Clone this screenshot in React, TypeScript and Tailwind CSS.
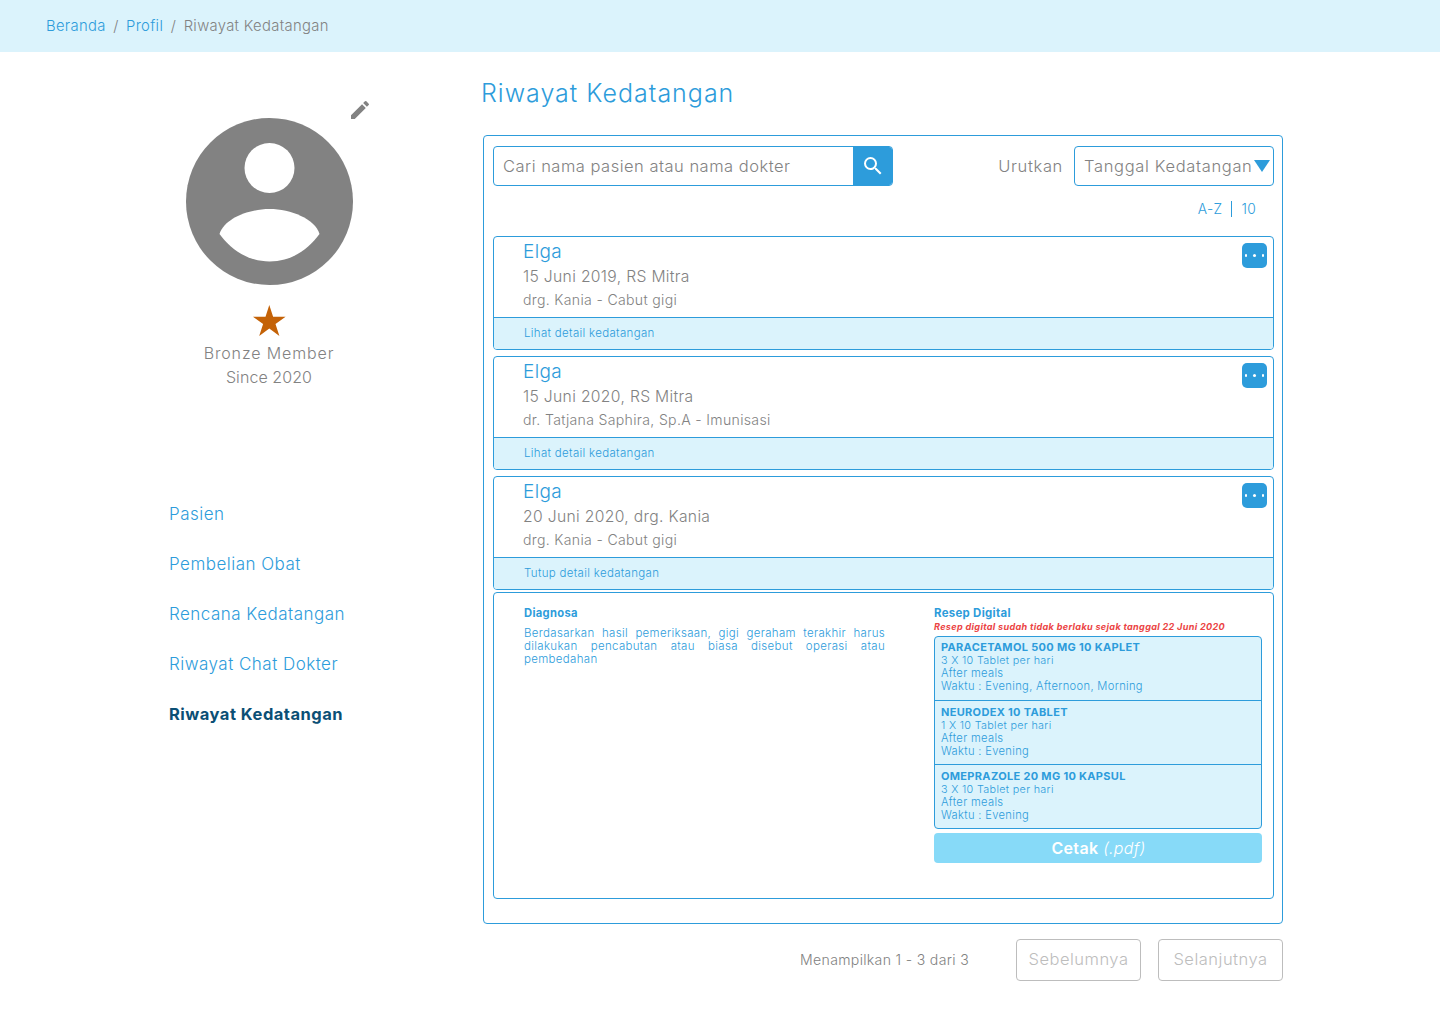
import { MdEdit, MdSearch } from "react-icons/md"

const visits = [
  { date: "15 Juni 2019, RS Mitra", info: "drg. Kania - Cabut gigi", action: "Lihat detail kedatangan" },
  { date: "15 Juni 2020, RS Mitra", info: "dr. Tatjana Saphira, Sp.A - Imunisasi", action: "Lihat detail kedatangan" },
  { date: "20 Juni 2020, drg. Kania", info: "drg. Kania - Cabut gigi", action: "Tutup detail kedatangan" },
]

const medicines = [
  { name: "PARACETAMOL 500 MG 10 KAPLET", dose: "3 X 10 Tablet per hari", time: "Waktu : Evening, Afternoon, Morning" },
  { name: "NEURODEX 10 TABLET", dose: "1 X 10 Tablet per hari", time: "Waktu : Evening" },
  { name: "OMEPRAZOLE 20 MG 10 KAPSUL", dose: "3 X 10 Tablet per hari", time: "Waktu : Evening" },
]

const menu = ["Pasien", "Pembelian Obat", "Rencana Kedatangan", "Riwayat Chat Dokter"]

function VisitCard({ date, info, action }: { date: string; info: string; action: string }) {
  return (
    <div className="relative overflow-hidden rounded-[4px] border border-[#2D9CDB]">
      <div className="h-[80px] pl-[29px] pt-[3px]">
        <div className="text-[19px] leading-[24px] text-[#2D9CDB]">Elga</div>
        <div className="mt-[1px] text-[15.700px] leading-[24px] text-[#828282]">{date}</div>
        <div className="-mt-[1px] text-[14.100px] leading-[24px] text-[#828282]">{info}</div>
      </div>
      <div className="flex h-[32px] items-center border-t border-[#2D9CDB] bg-[#DBF3FC] pl-[30px] text-[11.500px] text-[#2D9CDB]">
        {action}
      </div>
      <button className="absolute right-[6px] top-[6px] flex h-[25px] w-[25px] items-center justify-center gap-[6px] rounded-[5px] bg-[#2D9CDB]">
        <span className="h-[2.500px] w-[2.500px] rounded-full bg-white" />
        <span className="h-[2.500px] w-[2.500px] rounded-full bg-white" />
        <span className="h-[2.500px] w-[2.500px] rounded-full bg-white" />
      </button>
    </div>
  )
}

export default function App() {
  return (
    <div className="min-h-[1024px] bg-white font-['Inter',sans-serif] font-[350] tracking-[0.02em]">
      {/* Breadcrumb */}
      <nav className="flex h-[52px] items-center gap-[7.500px] bg-[#DBF3FC] pl-[46px] text-[14.800px] text-[#2D9CDB]">
        <span>Beranda</span>
        <span className="text-[#828282]">/</span>
        <span>Profil</span>
        <span className="text-[#828282]">/</span>
        <span className="text-[#828282]">Riwayat Kedatangan</span>
      </nav>

      <div className="flex">
        {/* Sidebar */}
        <aside className="w-[483px] shrink-0 pl-[169px]">
          <div className="flex w-[200px] flex-col items-center pt-[66px]">
            <div className="relative h-[167px] w-[167px]">
              <svg viewBox="0 0 167 167" className="h-full w-full">
                <circle cx="83.5" cy="83.5" r="83.5" fill="#828282" />
                <circle cx="83.5" cy="50" r="25" fill="#fff" />
                <path d="M33.5 116C38 101 62 91 83.5 91s45.500 10 50 25c-11 15-28 27.500-50 27.500s-39-12.500-50-27.500z" fill="#fff" />
              </svg>
              <MdEdit className="absolute left-[162px] top-[-20px] h-[24px] w-[24px] text-[#828282]" />
            </div>
            <svg viewBox="0 0 33 31" className="mt-[20px] h-[31px] w-[33px]">
              <path d="M16.300 0l3.800 11.800h12.500l-10.100 7.300 3.900 11.800-10.100-7.300-10.100 7.300 3.900-11.800L0 11.800h12.500z" fill="#C46207" />
            </svg>
            <div className="mt-[5px] text-center text-[16px] leading-[24px] text-[#828282]">
              <div className="tracking-[0.055em]">Bronze Member</div>
              <div className="tracking-[0.005em]">Since 2020</div>
            </div>
          </div>
          <ul className="mt-[113px] flex flex-col gap-[26px] text-[17px] leading-[24px] tracking-[0.028em] text-[#2D9CDB]">
            {menu.map((item) => (
              <li key={item}>{item}</li>
            ))}
            <li className="text-[16.500px] font-bold tracking-[0.03em] text-[#0B4F75]">Riwayat Kedatangan</li>
          </ul>
        </aside>

        {/* Main */}
        <main className="w-[800px] shrink-0">
          <h1 className="-ml-[2px] mt-[26px] text-[25px] font-[350] leading-[30px] tracking-[0.04em] text-[#2D9CDB]">Riwayat Kedatangan</h1>

          <div className="mt-[27px] h-[789px] rounded-[4px] border border-[#2D9CDB] pl-[9px] pr-[8px] pt-[10px]">
            <div className="flex items-center justify-between">
              <div className="flex h-[40px] w-[400px] overflow-hidden rounded-[4px] border border-[#2D9CDB]">
                <div className="flex flex-1 items-center pl-[9px] text-[16.500px] tracking-[0.03em] text-[#828282]">
                  Cari nama pasien atau nama dokter
                </div>
                <div className="flex w-[39px] items-center justify-center bg-[#2D9CDB]">
                  <MdSearch className="h-[24px] w-[24px] text-white" />
                </div>
              </div>
              <div className="flex items-center gap-[11px] text-[16.500px] tracking-[0.04em] text-[#828282]">
                <span>Urutkan</span>
                <div className="flex h-[40px] w-[200px] items-center justify-between rounded-[4px] border border-[#2D9CDB] pl-[9px] pr-[3px]">
                  <span>Tanggal Kedatangan</span>
                  <svg viewBox="0 0 16 12" className="h-[12px] w-[16px]">
                    <path d="M0 0h16L8 12z" fill="#2D9CDB" />
                  </svg>
                </div>
              </div>
            </div>

            <div className="mt-[13px] flex h-[20px] items-center justify-end pr-[18px] text-[13.800px] text-[#2D9CDB]">
              <span>A-Z</span>
              <span className="mx-[9px] h-[16px] w-px bg-[#2D9CDB]" />
              <span>10</span>
            </div>

            <div className="mt-[17px] flex flex-col gap-[6px]">
              {visits.map((visit) => (
                <VisitCard key={visit.date} {...visit} />
              ))}
            </div>

            {/* Detail */}
            <div className="mt-[2px] flex h-[307px] rounded-[4px] border border-[#2D9CDB] pl-[30px] pt-[14px] text-[#2D9CDB]">
              <div className="w-[361px]">
                <div className="text-[11.200px] font-bold leading-[13px]">Diagnosa</div>
                <p className="mt-[7px] text-justify text-[11.500px] leading-[13px]">
                  Berdasarkan hasil pemeriksaan, gigi geraham terakhir harus dilakukan pencabutan atau biasa disebut operasi atau pembedahan
                </p>
              </div>
              <div className="ml-[49px] w-[328px]">
                <div className="text-[11.400px] font-bold leading-[13px]">Resep Digital</div>
                <div className="text-[9.100px] font-bold italic leading-[13px] text-[#EB4444]">
                  Resep digital sudah tidak berlaku sejak tanggal 22 Juni 2020
                </div>
                <div className="mt-[3px] overflow-hidden rounded-[4px] border border-[#2D9CDB] bg-[#DBF3FC]">
                  {medicines.map((med) => (
                    <div key={med.name} className="h-[64px] border-b border-[#2D9CDB] px-[6px] pt-[5px] text-[11.200px] leading-[13px] first:pt-[4px] last:h-[63px] last:border-b-0">
                      <div className="text-[11px] font-bold">{med.name}</div>
                      <div className="text-[10.800px]">{med.dose}</div>
                      <div>After meals</div>
                      <div>{med.time}</div>
                    </div>
                  ))}
                </div>
                <button className="mt-[4px] h-[30px] w-full rounded-[4px] bg-[#87DAF8] pl-[1px] text-[16px] text-white">
                  <span className="font-semibold">Cetak</span> <span className="italic">(.pdf)</span>
                </button>
              </div>
            </div>
          </div>

          {/* Pagination */}
          <div className="mt-[15px] flex items-center justify-end text-[#BDBDBD]">
            <span className="mr-[47px] text-[14.100px] text-[#828282]">Menampilkan 1 - 3 dari 3</span>
            <button className="h-[42px] w-[125px] rounded-[4px] border border-[#BDBDBD] pb-[1px] text-[16.500px] tracking-[0.03em]">Sebelumnya</button>
            <button className="ml-[17px] h-[42px] w-[125px] rounded-[4px] border border-[#BDBDBD] pb-[1px] text-[16.500px] tracking-[0.03em]">Selanjutnya</button>
          </div>
        </main>
      </div>
    </div>
  )
}
